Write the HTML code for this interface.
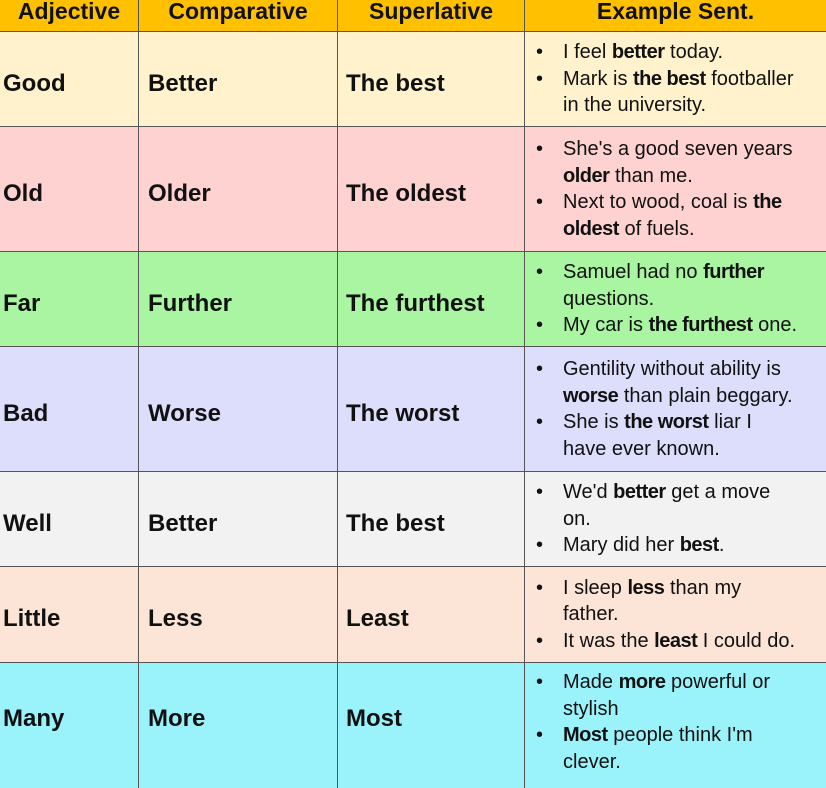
<!DOCTYPE html><html><head><style>
body{margin:0;width:826px;height:784px;overflow:hidden;font-family:"Liberation Sans",sans-serif;background:#fff}
.r{position:absolute;left:0;width:826px;display:flex;border-bottom:1px solid #555;box-sizing:border-box}
.c{box-sizing:border-box;border-right:1px solid #555;display:flex;align-items:center;font-weight:bold;font-size:24px;color:#111;padding-left:4px;padding-top:9px}
.c1{width:139px;padding-left:3px}.c2{width:199px;padding-left:9px}.c3{width:187px;padding-left:8px}.c4{width:301px;border-right:none;font-weight:normal;font-size:20px;padding-left:0;padding-top:0;white-space:nowrap}
ul{margin:0;padding:0 0 0 38px;list-style:none;line-height:26.5px}
li{position:relative}li:before{content:"•";position:absolute;left:-27px}
b{font-weight:bold;letter-spacing:-0.5px}
.h .c{font-size:23px;justify-content:center;padding:0;align-items:flex-end;padding-bottom:6px}
.m{padding-top:0;padding-bottom:14px}
</style></head><body>
<div class="r h" style="top:0;height:32px;background:#FFC000"><div class="c c1">Adjective</div><div class="c c2">Comparative</div><div class="c c3">Superlative</div><div class="c c4" style="font-weight:bold;font-size:23px">Example Sent.</div></div>
<div class="r" style="top:32px;height:95px;background:#FFF2CC"><div class="c c1">Good</div><div class="c c2">Better</div><div class="c c3">The best</div><div class="c c4"><ul><li>I feel <b>better</b> today.</li><li>Mark is <b>the best</b> footballer<br>in the university.</li></ul></div></div>
<div class="r" style="top:127px;height:125px;background:#FFD2D2"><div class="c c1">Old</div><div class="c c2">Older</div><div class="c c3">The oldest</div><div class="c c4"><ul><li>She's a good seven years<br><b>older</b> than me.</li><li>Next to wood, coal is <b>the</b><br><b>oldest</b> of fuels.</li></ul></div></div>
<div class="r" style="top:252px;height:95px;background:#A9F5A1"><div class="c c1">Far</div><div class="c c2">Further</div><div class="c c3">The furthest</div><div class="c c4"><ul><li>Samuel had no <b>further</b><br>questions.</li><li>My car is <b>the furthest</b> one.</li></ul></div></div>
<div class="r" style="top:347px;height:125px;background:#DCDEFC"><div class="c c1">Bad</div><div class="c c2">Worse</div><div class="c c3">The worst</div><div class="c c4"><ul><li>Gentility without ability is<br><b>worse</b> than plain beggary.</li><li>She is <b>the worst</b> liar I<br>have ever known.</li></ul></div></div>
<div class="r" style="top:472px;height:95px;background:#F2F2F2"><div class="c c1">Well</div><div class="c c2">Better</div><div class="c c3">The best</div><div class="c c4"><ul><li>We'd <b>better</b> get a move<br>on.</li><li>Mary did her <b>best</b>.</li></ul></div></div>
<div class="r" style="top:567px;height:96px;background:#FCE4D6"><div class="c c1">Little</div><div class="c c2">Less</div><div class="c c3">Least</div><div class="c c4"><ul><li>I sleep <b>less</b> than my<br>father.</li><li>It was the <b>least</b> I could do.</li></ul></div></div>
<div class="r" style="top:663px;height:125px;background:#9AF3FA;border-bottom:none"><div class="c c1 m">Many</div><div class="c c2 m">More</div><div class="c c3 m">Most</div><div class="c c4" style="align-items:flex-start;padding-top:6px"><ul><li>Made <b>more</b> powerful or<br>stylish</li><li><b>Most</b> people think I'm<br>clever.</li></ul></div></div>
</body></html>
